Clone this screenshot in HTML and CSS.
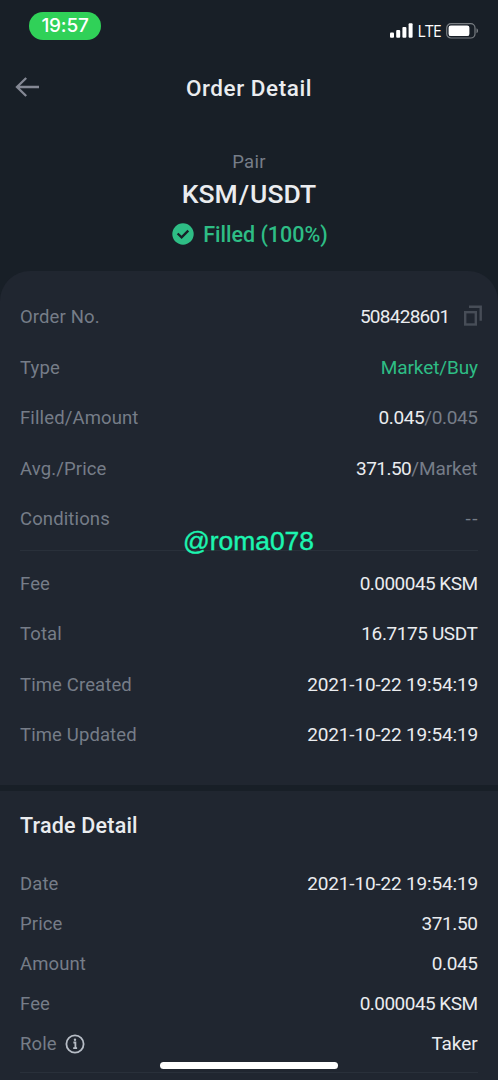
FILE: index.html
```html
<!DOCTYPE html>
<html lang="en">
<head>
<meta charset="utf-8">
<meta name="viewport" content="width=device-width, initial-scale=1">
<title>Order Detail</title>
<link rel="stylesheet" href="styles.css">
</head>
<body>
<main class="screen">
  <div class="status-bar">
    <span class="clock">19:57</span>
    <div class="indicators">
      <svg class="signal" width="23" height="15" viewBox="0 0 23 15" fill="#fff"><rect x="0" y="9.5" width="4" height="5.3" rx="1"/><rect x="6.2" y="7" width="4" height="7.8" rx="1"/><rect x="12.4" y="4" width="4" height="10.8" rx="1"/><rect x="18.6" y="0.3" width="4" height="14.5" rx="1"/></svg>
      <span class="network">LTE</span>
      <svg class="battery" width="33" height="16" viewBox="0 0 33 16"><rect x="0.7" y="0.7" width="28.3" height="14.3" rx="4.3" fill="none" stroke="#797e83" stroke-width="1.2"/><rect x="2.6" y="2.6" width="20.8" height="10.5" rx="2.2" fill="#fff"/><path d="M30.5 5.3v5c2-.8 2-4.200 0-5z" fill="#797e83"/></svg>
    </div>
  </div>
  <header class="nav">
    <svg class="back" width="26" height="22" viewBox="0 0 26 22" fill="none" stroke="#848894" stroke-width="2.3"><path d="M11.200 2L2 11l9.200 9M2.200 11H24"/></svg>
    <h1 class="title">Order Detail</h1>
  </header>
  <section class="summary">
    <div class="caption">Pair</div>
    <div class="pair">KSM<span class="slash">/</span>USDT</div>
    <div class="filled">
      <svg width="22" height="22" viewBox="0 0 22 22"><circle cx="11" cy="11" r="10.700" fill="#2ebd85"/><path d="M5.600 10.500l4 3.900 6.700-6.800" fill="none" stroke="#181f27" stroke-width="2.300"/></svg>
      <span>Filled (100%)</span>
    </div>
  </section>
  <section class="card">
    <div class="group">
      <div class="row"><span class="label">Order No.</span><span class="value with-copy"><span class="order-number">508428601</span><svg class="copy" width="18" height="21" viewBox="0 0 18 21" fill="none" stroke="#474d57" stroke-width="2.400"><rect x="1.200" y="7.200" width="10.600" height="12.300"/><path d="M5 1.700h11.700v14"/></svg></span></div>
      <div class="row"><span class="label">Type</span><span class="value buy">Market/Buy</span></div>
      <div class="row"><span class="label">Filled/Amount</span><span class="value number">0.045<span class="muted">/0.045</span></span></div>
      <div class="row"><span class="label">Avg./Price</span><span class="value">371.50<span class="muted word">/Market</span></span></div>
      <div class="row"><span class="label">Conditions</span><span class="value muted dashes">--</span></div>
    </div>
    <div class="group fees">
      <div class="row"><span class="label">Fee</span><span class="value">0.000045 KSM</span></div>
      <div class="row"><span class="label">Total</span><span class="value number">16.7175 USDT</span></div>
      <div class="row"><span class="label">Time Created</span><span class="value date">2021-10-22 19:54:19</span></div>
      <div class="row"><span class="label">Time Updated</span><span class="value date">2021-10-22 19:54:19</span></div>
    </div>
    <div class="watermark">@roma078</div>
  </section>
  <section class="trade">
    <h2 class="heading">Trade Detail</h2>
    <div class="trade-rows">
      <div class="row"><span class="label">Date</span><span class="value date">2021-10-22 19:54:19</span></div>
      <div class="row"><span class="label">Price</span><span class="value number">371.50</span></div>
      <div class="row"><span class="label">Amount</span><span class="value number">0.045</span></div>
      <div class="row"><span class="label">Fee</span><span class="value">0.000045 KSM</span></div>
      <div class="row"><span class="label role">Role <svg width="20" height="20" viewBox="0 0 20 20" fill="none" stroke="#b7bdc6" stroke-width="1.800"><circle cx="10" cy="10" r="8.600"/><path d="M8.400 8.500h2v5.600M8.200 14.200h3.900"/><circle cx="10" cy="5.700" r="1.200" fill="#b7bdc6" stroke="none"/></svg></span><span class="value word">Taker</span></div>
    </div>
  </section>
  <div class="home-indicator"></div>
</main>
</body>
</html>
```
FILE: styles.css
```css
* { box-sizing: border-box; }
body { margin: 0; background: #181f27; }
.screen {
  position: relative;
  width: 498px;
  height: 1080px;
  overflow: hidden;
  background: #181f27;
  color: #eaecef;
  font-family: Roboto, "Liberation Sans", sans-serif;
  font-size: 18.5px;
}
.status-bar {
  display: flex;
  justify-content: space-between;
  align-items: flex-start;
  height: 62px;
  padding: 12px 19px 0 29px;
}
.clock {
  width: 72px;
  height: 28px;
  border-radius: 14px;
  background: #30d158;
  color: #fff;
  font: 500 19px/28px Inter, sans-serif;
  letter-spacing: -0.2px;
  text-align: center;
}
.indicators { display: flex; align-items: center; height: 37px; }
.network {
  margin: 0 5px;
  color: #fff;
  font: 500 15.5px/20px "Open Sans", sans-serif;
  letter-spacing: -0.6px;
}
.nav { position: relative; height: 52px; }
.back { position: absolute; left: 15px; top: 14px; }
.title {
  margin: 0;
  font-size: 22.5px;
  line-height: 52px;
  font-weight: 500;
  letter-spacing: 0.55px;
  text-align: center;
}
.summary { height: 157px; padding-top: 36px; text-align: center; }
.caption { color: #767d88; font-size: 18.5px; line-height: 24px; letter-spacing: 0.3px; }
.pair { margin-top: 4px; font-size: 26.5px; line-height: 32px; font-weight: 500; }
.slash { margin: 0 1px; }
.filled {
  display: flex;
  justify-content: center;
  align-items: center;
  gap: 9px;
  margin-top: 10px;
  padding-left: 2px;
  height: 28px;
  color: #2ebd85;
  font-size: 21.5px;
  font-weight: 500;
}
.card {
  position: relative;
  height: 514px;
  padding: 21px 20px 0;
  border-radius: 30px 30px 0 0;
  background: #202630;
}
.row { display: flex; justify-content: space-between; align-items: center; height: 50.5px; }
.label { color: #767d88; letter-spacing: 0.12px; }
.value {
  padding-bottom: 1px;
  color: #eaecef;
  font-size: 19px;
  letter-spacing: -0.54px;
  margin-right: 0.5px;
}
.number { letter-spacing: -0.4px; }
.date { letter-spacing: -0.17px; margin-right: 0; }
.order-number { letter-spacing: -0.72px; }
.word { letter-spacing: -0.1px; }
.with-copy { display: flex; align-items: center; gap: 14px; margin-right: -3.5px; }
.copy { margin-top: -2px; }
.buy { color: #2ebd85; letter-spacing: -0.1px; margin-right: 0; }
.muted { color: #767d88; }
.dashes { letter-spacing: 1.5px; margin-right: -1px; }
.fees { margin-top: 5px; padding-top: 8px; border-top: 1px solid #29303a; }
.watermark {
  position: absolute;
  left: 183px;
  top: 254px;
  color: #1cf5b0;
  font: 26.4px/32px "Liberation Sans", Arial, sans-serif;
  -webkit-text-stroke: 0.4px #1cf5b0;
}
.trade { height: 289px; margin-top: 6px; padding: 18px 20px 0; background: #202630; }
.heading { margin: 0; font-size: 21.5px; line-height: 34px; font-weight: 500; letter-spacing: 0.2px; }
.trade-rows { margin-top: 20.5px; height: 209.5px; border-bottom: 1px solid #29303a; }
.trade-rows .row { height: 40.2px; }
.role { display: flex; align-items: center; gap: 8px; }
.home-indicator {
  position: absolute;
  left: 160px;
  bottom: 11px;
  width: 178px;
  height: 7px;
  border-radius: 4px;
  background: #fff;
}
```
